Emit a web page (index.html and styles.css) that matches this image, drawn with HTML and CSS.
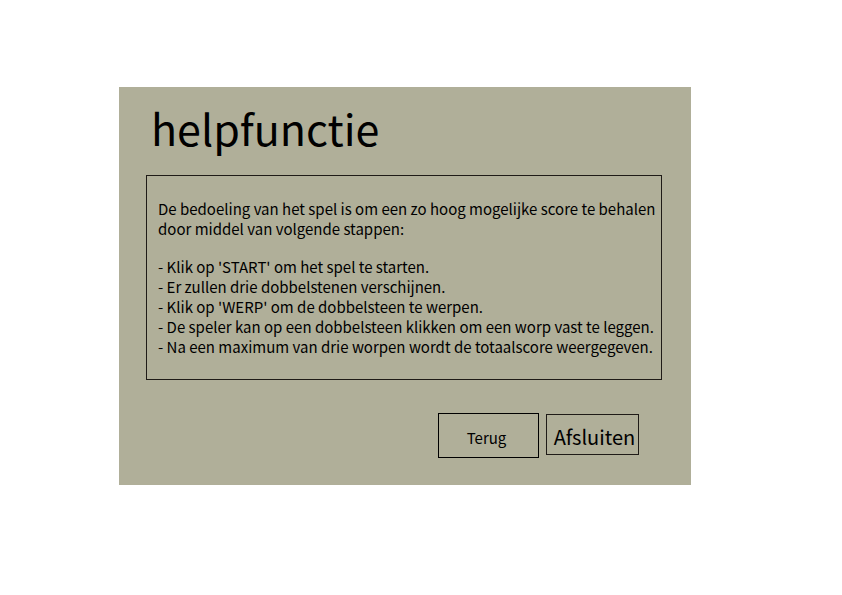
FILE: index.html
```html
<!DOCTYPE html>
<html lang="nl">
<head>
<meta charset="utf-8">
<title>helpfunctie</title>
<link rel="stylesheet" href="styles.css">
</head>
<body>
<main class="panel">
  <h1 class="title">helpfunctie</h1>
  <section class="help">
    <p>De bedoeling van het spel is om een zo hoog mogelijke score te behalen<br>door middel van volgende stappen:</p>
    <ul class="steps">
      <li>- Klik op 'START' om het spel te starten.</li>
      <li>- Er zullen drie dobbelstenen verschijnen.</li>
      <li>- Klik op 'WERP' om de dobbelsteen te werpen.</li>
      <li>- De speler kan op een dobbelsteen klikken om een worp vast te leggen.</li>
      <li>- Na een maximum van drie worpen wordt de totaalscore weergegeven.</li>
    </ul>
  </section>
  <div class="actions">
    <button class="button back" type="button">Terug</button>
    <button class="button close" type="button">Afsluiten</button>
  </div>
</main>
</body>
</html>
```
FILE: styles.css
```css
* {
  box-sizing: border-box;
}

body {
  margin: 0;
  padding: 87px 151px 110px 119px;
  background: #fff;
  color: #000;
  font-family: "Noto Sans CJK JP", "Noto Sans", sans-serif;
}

.panel {
  padding: 12px 29px 27px 27px;
  background: #b0af99;
}

.title {
  margin: 0 0 20px;
  padding-left: 5px;
  font-size: 43px;
  font-weight: 400;
  line-height: 56px;
}

.help {
  padding: 23px 0 22px 11px;
  border: 1px solid #1f1b17;
  font-size: 15px;
  line-height: 20px;
  white-space: nowrap;
}

.help p {
  margin: 0 0 18px;
}

.steps {
  margin: 0;
  padding: 0;
  list-style: none;
}

.actions {
  display: flex;
  justify-content: flex-end;
  align-items: flex-start;
  gap: 7px;
  margin-top: 33px;
  padding-right: 23px;
}

.button {
  border: 1px solid #000;
  border-radius: 0;
  background: transparent;
  color: #000;
  font-family: inherit;
}

.back {
  width: 101px;
  height: 45px;
  padding: 4px 4px 0 0;
  font-size: 15px;
}

.close {
  width: 93px;
  height: 41px;
  margin-top: 1px;
  padding: 4px 0 0 4px;
  border-color: #1f1b17;
  font-size: 20px;
}
```
